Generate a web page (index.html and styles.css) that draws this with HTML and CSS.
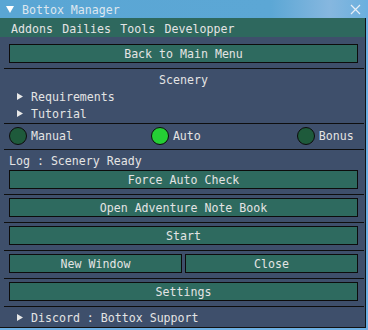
FILE: index.html
```html
<!DOCTYPE html>
<html lang="en">
<head>
	<meta charset="UTF-8">
	<title>Bottox Manager</title>
	<link rel="stylesheet" href="styles.css">
</head>
<body>
	<div class="window">
		<div class="titlebar">
			<svg class="collapse" width="8" height="7" viewBox="0 0 8 7"><polygon points="0,0 8,0 4,7" fill="#fff"/></svg>
			<span class="title">Bottox Manager</span>
			<svg class="close-x" width="11" height="11" viewBox="0 0 11 11"><path d="M1 1 L10 10 M10 1 L1 10" stroke="#e6eef6" stroke-width="1.2" fill="none"/></svg>
		</div>
		<div class="menubar">
			<span>Addons</span>
			<span>Dailies</span>
			<span>Tools</span>
			<span>Developper</span>
		</div>
		<div class="content">
			<div class="btn first">Back to Main Menu</div>
			<div class="sep"></div>

			<div class="line center scenery">Scenery</div>
			<div class="line tree"><svg class="arrow" width="6" height="7" viewBox="0 0 6 7"><polygon points="0,0 6,3.5 0,7" fill="#e8e8e8"/></svg>Requirements</div>
			<div class="line tree"><svg class="arrow" width="6" height="7" viewBox="0 0 6 7"><polygon points="0,0 6,3.5 0,7" fill="#e8e8e8"/></svg>Tutorial</div>
			<div class="sep after-tree"></div>

			<div class="radios">
				<div class="radio"><span class="dot"></span>Manual</div>
				<div class="radio auto"><span class="dot on"></span>Auto</div>
				<div class="radio bonus"><span class="dot"></span>Bonus</div>
			</div>
			<div class="sep after-radios"></div>

			<div class="line log">Log : Scenery Ready</div>
			<div class="btn after-log">Force Auto Check</div>
			<div class="sep"></div>
			<div class="btn">Open Adventure Note Book</div>
			<div class="sep"></div>
			<div class="btn">Start</div>
			<div class="sep"></div>
			<div class="btn-row">
				<div class="btn">New Window</div>
				<div class="btn">Close</div>
			</div>
			<div class="sep"></div>
			<div class="btn">Settings</div>
			<div class="sep"></div>
			<div class="line tree discord"><svg class="arrow" width="6" height="7" viewBox="0 0 6 7"><polygon points="0,0 6,3.5 0,7" fill="#e8e8e8"/></svg>Discord : Bottox Support</div>
		</div>
	</div>
</body>
</html>
```

FILE: styles.css
```css
* {
	box-sizing: border-box;
}
body {
	margin: 0;
	background: #3e4f6b;
	font-family: "DejaVu Sans Mono", "Liberation Mono", monospace;
	font-size: 11.6px;
	color: #e4e4e4;
}
.window {
	width: 368px;
	height: 330px;
	background: #3e4f6b;
	border-right: 2px solid #6cafe2;
	border-bottom: 2px solid #6cafe2;
	position: relative;
	overflow: hidden;
}
.window::after {
	/* inner black frame line */
	content: "";
	position: absolute;
	top: 18px;
	left: 0;
	right: 0;
	bottom: 0;
	border-right: 1px solid #111;
	border-bottom: 1px solid #111;
	pointer-events: none;
}

/*标题栏*/
.titlebar {
	height: 18px;
	display: flex;
	align-items: center;
	padding-left: 6px;
	padding-top: 1px;
	background: linear-gradient(to right, #5aa6d4 0%, #5ca7d5 74%, #86b7df 90%, #6cb0de 100%);
	color: #dde6ef;
}
.collapse {
	margin-right: 8px;
}
.title {
	flex: 1;
}
.close-x {
	margin-right: 5px;
}

/*菜单栏*/
.menubar {
	height: 19px;
	display: flex;
	align-items: center;
	gap: 9.3px;
	padding-left: 11px;
	background: #2e685e;
	padding-top: 3px;
}

.content {
	padding: 0 8px 0 9px;
}
.line {
	height: 17px;
	line-height: 18px;
	white-space: nowrap;
}
.center {
	text-align: center;
}
.scenery {
	margin-top: 2px;
}
.tree {
	display: flex;
	align-items: center;
	padding-left: 8px;
}
.arrow {
	margin-right: 8px;
}

.btn {
	height: 19px;
	line-height: 18px;
	text-align: center;
	background: #2e6a5f;
	border: 1px solid #0c0c0c;
	margin-top: 3px;
	white-space: nowrap;
}
.btn.first {
	margin-top: 7px;
}
.btn.after-log {
	margin-top: 1px;
}
.btn-row {
	display: flex;
	gap: 3px;
	margin-top: 3px;
}
.btn-row .btn {
	flex: 1;
	margin-top: 0;
}

.sep {
	height: 1px;
	background: #0e0e0e;
	margin: 5px -6px 0 -5px;
}
.sep.after-tree {
	margin-top: 1px;
}
.sep.after-radios {
	margin-top: 4px;
}

/*单选按钮*/
.radios {
	display: flex;
	height: 18px;
	margin-top: 3px;
	line-height: 19px;
}
.radio {
	display: flex;
	align-items: center;
	gap: 4px;
}
.radio.auto {
	margin-left: 78px;
}
.radio.bonus {
	margin-left: 96px;
}
.dot {
	width: 18px;
	height: 18px;
	border-radius: 50%;
	background: #1e5a3b;
	border: 1px solid #0c0c0c;
}
.dot.on {
	background: #25cf35;
}

.log {
	margin-top: 2px;
}
.discord {
	margin-top: 2px;
}
```
